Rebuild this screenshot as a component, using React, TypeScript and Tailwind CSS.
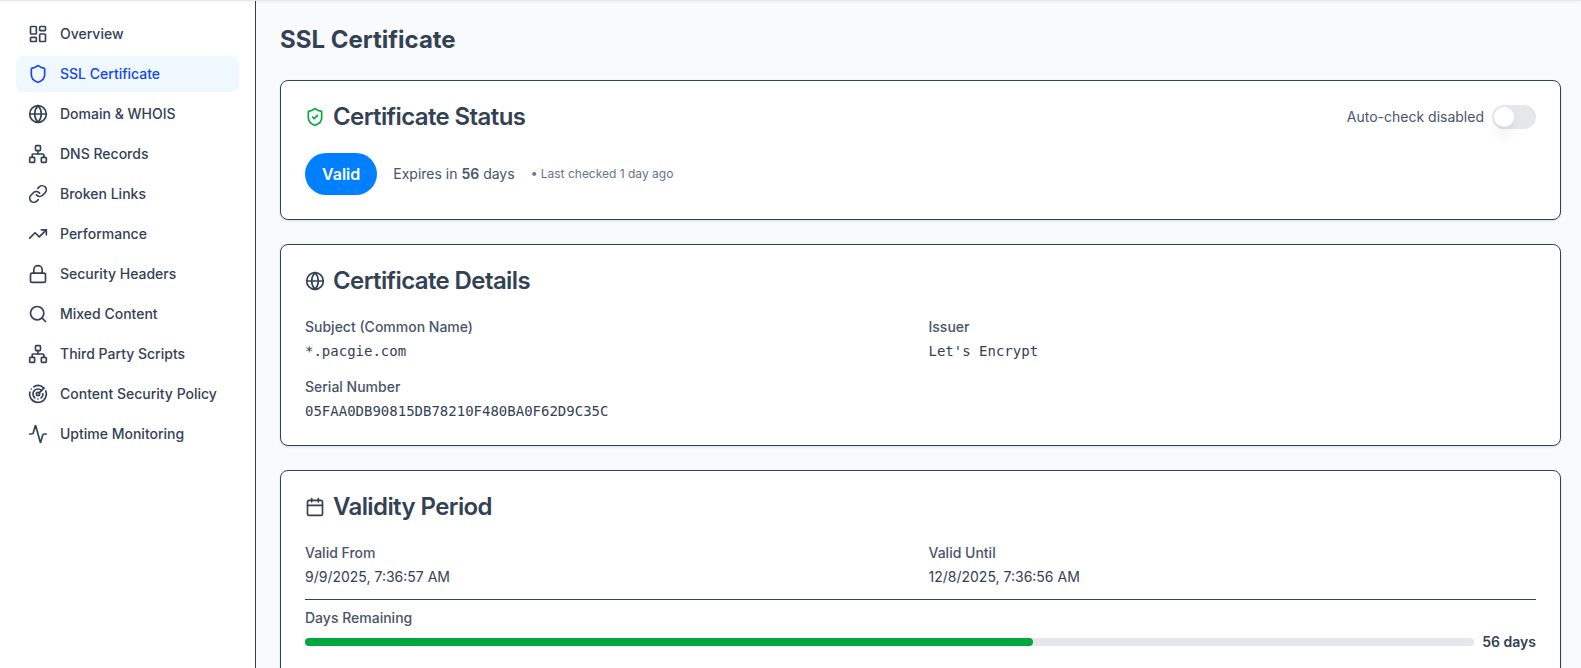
import { useState, type ReactNode } from 'react'
import {
  Activity,
  Calendar,
  Globe,
  LayoutDashboard,
  Link,
  Lock,
  Network,
  Radar,
  Search,
  Shield,
  ShieldCheck,
  TrendingUp,
  type LucideIcon,
} from 'lucide-react'
import clsx from 'clsx'

interface NavItem {
  label: string
  icon: LucideIcon
}

const navItems: NavItem[] = [
  { label: 'Overview', icon: LayoutDashboard },
  { label: 'SSL Certificate', icon: Shield },
  { label: 'Domain & WHOIS', icon: Globe },
  { label: 'DNS Records', icon: Network },
  { label: 'Broken Links', icon: Link },
  { label: 'Performance', icon: TrendingUp },
  { label: 'Security Headers', icon: Lock },
  { label: 'Mixed Content', icon: Search },
  { label: 'Third Party Scripts', icon: Network },
  { label: 'Content Security Policy', icon: Radar },
  { label: 'Uptime Monitoring', icon: Activity },
]

const certificate = {
  subject: '*.pacgie.com',
  issuer: "Let's Encrypt",
  serial: '05FAA0DB90815DB78210F480BA0F62D9C35C',
  validFrom: '9/9/2025, 7:36:57 AM',
  validUntil: '12/8/2025, 7:36:56 AM',
  daysLeft: 56,
  totalDays: 90,
}

function Sidebar() {
  const [active, setActive] = useState('SSL Certificate')

  return (
    <aside className="w-64 shrink-0 border-r border-[#334155] bg-white p-4">
      <nav className="flex flex-col gap-1">
        {navItems.map(({ label, icon: Icon }) => (
          <a
            key={label}
            href="#"
            onClick={() => setActive(label)}
            className={clsx(
              'flex items-center gap-3 rounded-lg px-3 py-2 text-sm font-medium',
              active === label ? 'bg-[#f0f8ff] text-blue-700' : 'text-[#334155] hover:bg-slate-50'
            )}
          >
            <Icon className="h-5 w-5 shrink-0" />
            {label}
          </a>
        ))}
      </nav>
    </aside>
  )
}

interface CardProps {
  title: string
  icon: ReactNode
  action?: ReactNode
  children: ReactNode
}

function Card({ title, icon, action, children }: CardProps) {
  return (
    <section className="rounded-lg border border-[#334155] bg-white p-6 shadow-sm">
      <div className="mb-6 flex items-center justify-between">
        <h2 className="flex items-center gap-2 text-2xl leading-6 font-semibold tracking-tight">
          {icon}
          {title}
        </h2>
        {action}
      </div>
      {children}
    </section>
  )
}

function Field({ label, value, mono }: { label: string; value: string; mono?: boolean }) {
  return (
    <div className="flex flex-col gap-1 text-sm">
      <dt className="font-medium text-[#475569]">{label}</dt>
      <dd className={clsx(mono && "font-['DejaVu_Sans_Mono',monospace]")}>{value}</dd>
    </div>
  )
}

function AutoCheckToggle() {
  const [enabled, setEnabled] = useState(false)

  return (
    <label className="flex cursor-pointer items-center gap-2 text-sm text-[#475569]">
      Auto-check {enabled ? 'enabled' : 'disabled'}
      <input
        type="checkbox"
        role="switch"
        checked={enabled}
        onChange={(e) => setEnabled(e.target.checked)}
        className="flex h-6 w-11 cursor-pointer appearance-none items-center rounded-full bg-gray-200 px-0.5 transition-colors before:h-5 before:w-5 before:rounded-full before:bg-white before:shadow-lg before:transition-transform checked:bg-[#0080ff] checked:before:translate-x-5"
      />
    </label>
  )
}

export default function App() {
  const { subject, issuer, serial, validFrom, validUntil, daysLeft, totalDays } = certificate

  return (
    <div className="flex h-screen flex-col overflow-hidden bg-[#f8fafc] font-['Inter',sans-serif] text-[#334155]">
      {/* Bottom edge of the top bar */}
      <div className="z-10 -mb-px h-px shrink-0 bg-gray-200 shadow" />

      <div className="flex min-h-0 flex-1">
        <Sidebar />

        <main className="flex-1 overflow-y-auto py-6 pr-5 pl-6 [scrollbar-width:none]">
          <h1 className="mb-6 text-2xl font-bold">SSL Certificate</h1>

          <div className="flex flex-col gap-6">
            <Card
              title="Certificate Status"
              icon={<ShieldCheck className="h-5 w-5 text-green-600" />}
              action={<AutoCheckToggle />}
            >
              <div className="flex items-center gap-4">
                <span className="rounded-full border border-transparent bg-[#0080ff] px-4 py-2 font-semibold text-white">
                  Valid
                </span>
                <span className="text-sm text-[#475569]">
                  Expires in <strong className="font-semibold">{daysLeft}</strong> days
                </span>
                <span className="text-xs text-[#64748b]">• Last checked 1 day ago</span>
              </div>
            </Card>

            <Card title="Certificate Details" icon={<Globe className="h-5 w-5" />}>
              <dl className="grid grid-cols-2 gap-4">
                <Field label="Subject (Common Name)" value={subject} mono />
                <Field label="Issuer" value={issuer} mono />
                <Field label="Serial Number" value={serial} mono />
              </dl>
            </Card>

            <Card title="Validity Period" icon={<Calendar className="h-5 w-5" />}>
              <dl className="grid grid-cols-2 gap-4">
                <Field label="Valid From" value={validFrom} />
                <Field label="Valid Until" value={validUntil} />
              </dl>
              <div className="mt-3 border-t border-[#334155] pt-2 text-sm">
                <p className="mb-1 font-medium text-[#475569]">Days Remaining</p>
                <div className="flex items-center gap-2">
                  <div className="h-2 flex-1 rounded-full bg-gray-200">
                    <div
                      className="h-2 rounded-full bg-green-600"
                      style={{ width: `${(daysLeft / totalDays) * 100}%` }}
                    />
                  </div>
                  <span className="font-semibold">{daysLeft} days</span>
                </div>
              </div>
            </Card>
          </div>
        </main>
      </div>
    </div>
  )
}
